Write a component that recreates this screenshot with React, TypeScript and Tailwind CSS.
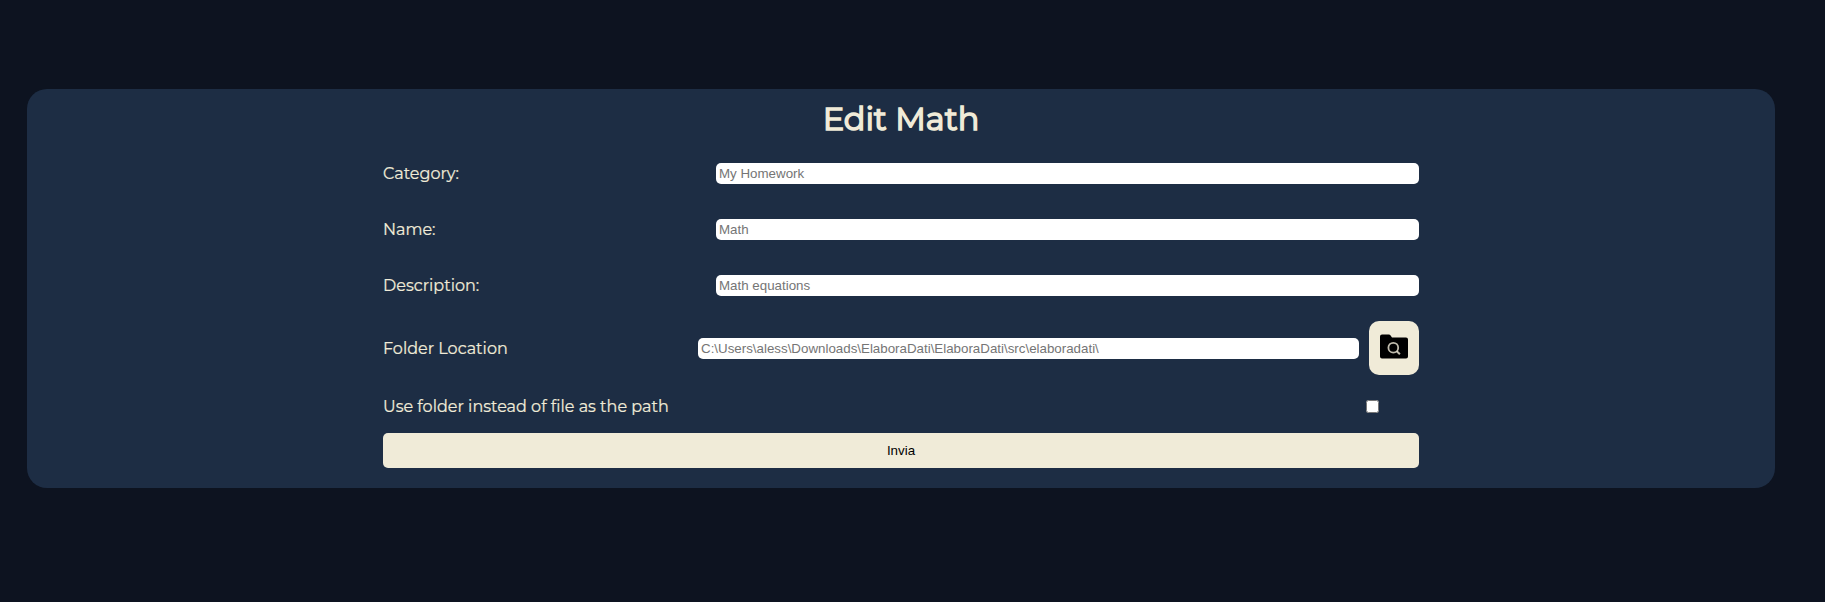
import React from "react";

type FieldProps = { id: string; label: string; placeholder: string };

const inputStyle =
  "h-[21px] rounded-[5px] bg-white px-[3px] font-['Liberation_Sans'] text-[13.333px] leading-[15px] text-black outline-none placeholder:text-[#757575]";

const labelStyle = "shrink-0 [-webkit-text-stroke:0.2px_#f0ebd8]";

function Field({ id, label, placeholder }: FieldProps) {
  return (
    <div className="flex h-[21px] items-center">
      <label htmlFor={id} className={`w-[333px] ${labelStyle}`}>
        {label}
      </label>
      <input id={id} placeholder={placeholder} className={`min-w-0 flex-1 ${inputStyle}`} />
    </div>
  );
}

function FolderSearchIcon() {
  return (
    <svg width="28" height="25" viewBox="0 0 28 25" aria-hidden="true">
      <path d="M2 0.5H9Q9.8 0.5 10.4 1.2L12 3.5H26Q28 3.5 28 5.5V22.5Q28 24.5 26 24.5H2Q0 24.5 0 22.5V2.5Q0 0.5 2 0.5Z" fill="#000" />
      <circle cx="13.3" cy="13.7" r="4.9" fill="none" stroke="#f0ebd8" strokeOpacity="0.8" strokeWidth="1.8" />
      <path d="M16.8 17.2L19.9 20.2" stroke="#f0ebd8" strokeOpacity="0.8" strokeWidth="2" />
    </svg>
  );
}

export default function App() {
  return (
    <main className="h-[602px] bg-[#0d1320] pt-[89px] pl-[27px] font-['Montserrat','Inter',sans-serif] text-[#f0ebd8]">
      <section className="flex h-[399px] w-[1748px] flex-col items-center rounded-[20px] bg-[#1d2d44]">
        <h1 className="mt-[10px] h-[40px] text-[32px] leading-[40px] font-normal whitespace-nowrap [-webkit-text-stroke:1.5px_#f0ebd8]">Edit Math</h1>
        <form className="mt-6 flex w-[1036px] flex-col text-base leading-5" onSubmit={(e) => e.preventDefault()}>
          <div className="flex flex-col gap-[35px]">
            <Field id="category" label="Category:" placeholder="My Homework" />
            <Field id="name" label="Name:" placeholder="Math" />
            <Field id="description" label="Description:" placeholder="Math equations" />
          </div>
          <div className="mt-[25px] flex h-[54px] items-center">
            <label htmlFor="folder" className={`w-[315px] pt-px ${labelStyle}`}>
              Folder Location
            </label>
            <input
              id="folder"
              placeholder="C:\Users\aless\Downloads\ElaboraDati\ElaboraDati\src\elaboradati\"
              className={`w-[661px] ${inputStyle}`}
            />
            <button type="button" aria-label="Browse" className="ml-[10px] flex h-[54px] w-[50px] items-center justify-center rounded-[10px] bg-[#f0ebd8] pb-1">
              <FolderSearchIcon />
            </button>
          </div>
          <div className="mt-[21px] flex h-5 items-center">
            <label htmlFor="use-folder" className={`w-[983.4px] pt-px ${labelStyle}`}>
              Use folder instead of file as the path
            </label>
            <input id="use-folder" type="checkbox" className="m-0 size-[13px]" />
          </div>
          <button type="submit" className="mt-[17px] h-[35px] rounded-[5px] bg-[#f0ebd8] font-['Liberation_Sans'] text-[13.333px] leading-[15px] text-black">
            Invia
          </button>
        </form>
      </section>
    </main>
  );
}
